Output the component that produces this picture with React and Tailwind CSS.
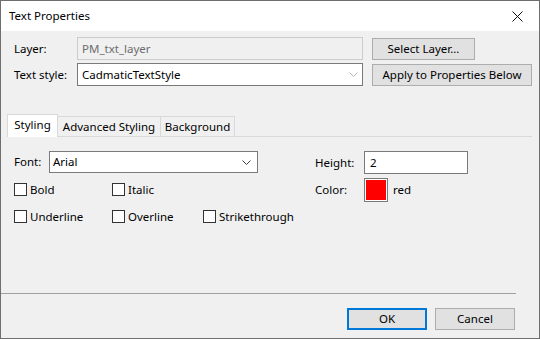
import React from 'react';

const font = { fontFamily: '"Noto Sans", "Open Sans", sans-serif' };

function Check({ label }) {
  return (
    <label className="flex items-center gap-[3px]">
      <span className="w-[13px] h-[13px] border border-[#333] bg-white" />
      <span>{label}</span>
    </label>
  );
}

function Chevron({ light }) {
  return (
    <svg width="9" height="5" viewBox="0 0 9 5" className="shrink-0">
      <path d="M0.5 0.5 L4.5 4.5 L8.5 0.5" fill="none" stroke={light ? '#b5b5b5' : '#404040'} strokeWidth="1" />
    </svg>
  );
}

export default function App() {
  return (
    <div
      className="w-[540px] h-[339px] flex flex-col border border-[#6e6e6e] bg-[#f0f0f0] text-[11.5px] leading-none text-black overflow-hidden"
      style={font}
    >
      {/* title bar */}
      <div className="h-[30px] bg-white flex items-center justify-between pl-[8px] pr-[16px]">
        <span>Text Properties</span>
        <svg width="11" height="11" viewBox="0 0 11 11">
          <path d="M0.5 0.5 L10.5 10.5 M10.5 0.5 L0.5 10.5" stroke="#111" strokeWidth="1" />
        </svg>
      </div>

      {/* header rows */}
      <div className="pt-[6px] pl-[13px] pr-[6px] flex flex-col gap-[3px]">
        <div className="flex items-center">
          <span className="w-[63px]">Layer:</span>
          <div className="w-[286px] h-[23px] border border-[#cccccc] bg-[#f0f0f0] text-[#6d6d6d] flex items-center pl-[4px]">
            PM_txt_layer
          </div>
          <button className="ml-[9px] w-[103px] h-[22px] border border-[#adadad] bg-[#e1e1e1] flex items-center justify-center">
            Select Layer...
          </button>
        </div>
        <div className="flex items-center">
          <span className="w-[63px]">Text style:</span>
          <div className="w-[286px] h-[23px] border border-[#7a7a7a] bg-white flex items-center justify-between pl-[4px] pr-[4px]">
            <span>CadmaticTextStyle</span>
            <Chevron light />
          </div>
          <button className="ml-[9px] w-[160px] h-[22px] border border-[#adadad] bg-[#e1e1e1] flex items-center justify-center">
            Apply to Properties Below
          </button>
        </div>
      </div>

      {/* tabs */}
      <div className="mt-[28px] pl-[6px] pr-[7px]">
        <div className="flex items-end border-b border-[#d9d9d9] h-[23px]">
          <div className="h-[23px] w-[51px] bg-white border border-b-0 border-[#d9d9d9] flex items-center justify-center mb-[-1px] pb-[2px]">
            Styling
          </div>
          <div className="h-[20px] w-[103px] border-t border-r border-[#d9d9d9] flex items-center justify-center">
            Advanced Styling
          </div>
          <div className="h-[20px] w-[74px] border-t border-r border-[#d9d9d9] flex items-center justify-center">
            Background
          </div>
        </div>
      </div>

      {/* tab content */}
      <div className="flex-1 pt-[14px] pl-[13px] flex">
        <div className="w-[301px] flex flex-col">
          <div className="flex items-center h-[22px]">
            <span className="w-[35px]">Font:</span>
            <div className="w-[209px] h-[22px] border border-[#7a7a7a] bg-white flex items-center justify-between pl-[3px] pr-[6px]">
              <span>Arial</span>
              <Chevron />
            </div>
          </div>
          <div className="flex mt-[10px]">
            <div className="w-[98px]"><Check label="Bold" /></div>
            <div className="w-[91px]"><Check label="Italic" /></div>
          </div>
          <div className="flex mt-[14px]">
            <div className="w-[98px]"><Check label="Underline" /></div>
            <div className="w-[91px]"><Check label="Overline" /></div>
            <div><Check label="Strikethrough" /></div>
          </div>
        </div>
        <div className="flex flex-col">
          <div className="flex items-center h-[23px]">
            <span className="w-[49px]">Height:</span>
            <div className="w-[104px] h-[23px] border border-[#7a7a7a] bg-white flex items-center pl-[5px]">2</div>
          </div>
          <div className="flex items-center mt-[4px]">
            <span className="w-[49px]">Color:</span>
            <div className="w-[24px] h-[24px] border border-[#7a7a7a] p-px bg-white">
              <div className="w-full h-full bg-[#ff0000]" />
            </div>
            <span className="ml-[5px]">red</span>
          </div>
        </div>
      </div>

      {/* footer */}
      <div className="w-[515px] border-t border-[#a0a0a0]" />
      <div className="h-[44px] flex items-start justify-end pt-[14px] pr-[24px] gap-[8px]">
        <button className="w-[80px] h-[22px] border-2 border-[#0078d7] bg-[#e1e1e1] flex items-center justify-center">
          OK
        </button>
        <button className="w-[80px] h-[22px] border border-[#adadad] bg-[#e1e1e1] flex items-center justify-center">
          Cancel
        </button>
      </div>
    </div>
  );
}
